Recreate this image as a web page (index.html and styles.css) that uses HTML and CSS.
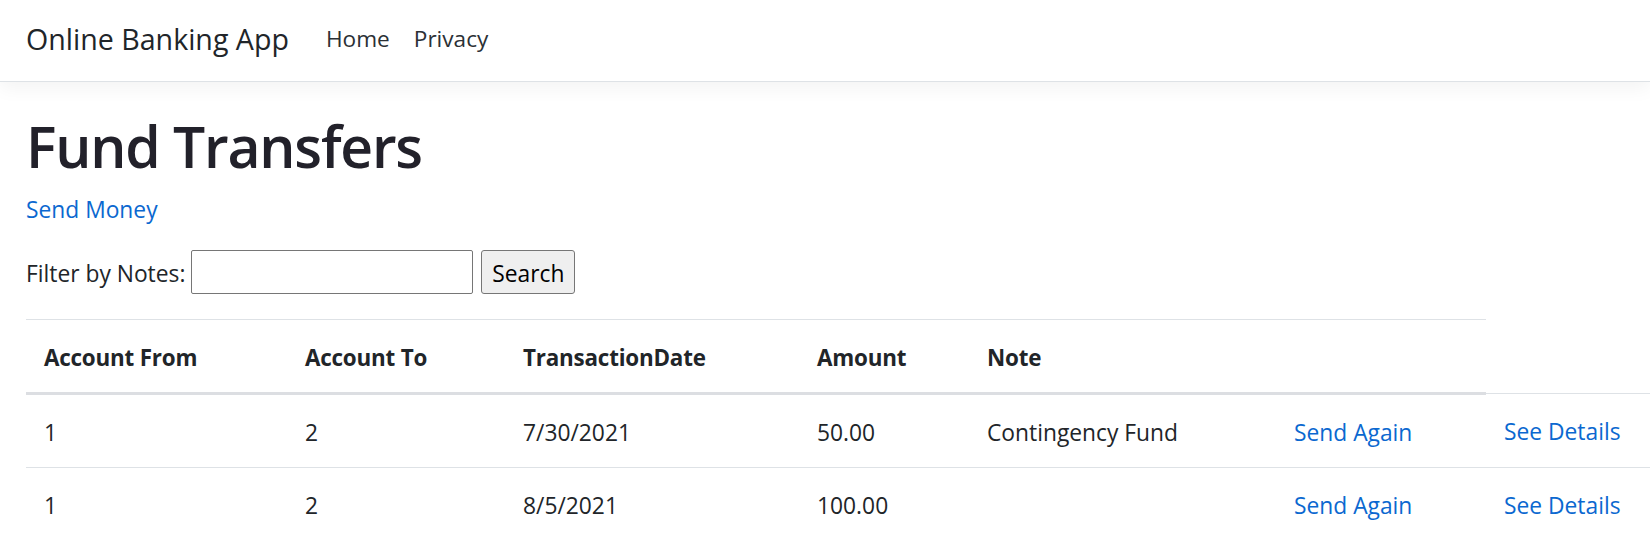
FILE: index.html
```html
<!DOCTYPE html>
<html lang="en">
<head>
<meta charset="utf-8">
<title>Fund Transfers - Online Banking App</title>
<link rel="stylesheet" href="styles.css">
</head>
<body>
<header class="navbar">
  <a class="brand" href="#">Online Banking App</a>
  <nav class="nav">
    <a class="nav-link" href="#">Home</a>
    <a class="nav-link" href="#">Privacy</a>
  </nav>
</header>
<main class="page">
  <h1 class="title">Fund Transfers</h1>
  <p class="action"><a class="link" href="#">Send Money</a></p>
  <form class="filter">
    <label class="filter-label" for="notes">Filter by Notes:</label>
    <input id="notes" type="text" class="filter-input">
    <button type="submit" class="filter-btn">Search</button>
  </form>
  <table class="transfers">
    <colgroup>
      <col class="c-from">
      <col class="c-to">
      <col class="c-date">
      <col class="c-amount">
      <col class="c-note">
      <col class="c-again">
      <col class="c-details">
    </colgroup>
    <thead>
      <tr>
        <th>Account From</th>
        <th>Account To</th>
        <th>TransactionDate</th>
        <th>Amount</th>
        <th>Note</th>
        <th></th>
      </tr>
    </thead>
    <tbody>
      <tr>
        <td>1</td>
        <td>2</td>
        <td>7/30/2021</td>
        <td>50.00</td>
        <td>Contingency Fund</td>
        <td><a class="link" href="#">Send Again</a></td>
        <td><a class="link" href="#">See Details</a></td>
      </tr>
      <tr>
        <td>1</td>
        <td>2</td>
        <td>8/5/2021</td>
        <td>100.00</td>
        <td></td>
        <td><a class="link" href="#">Send Again</a></td>
        <td><a class="link" href="#">See Details</a></td>
      </tr>
    </tbody>
  </table>
</main>
</body>
</html>
```

FILE: styles.css
```css
html, body {
  margin: 0;
  padding: 0;
  overflow: hidden;
}

body {
  font-family: "Open Sans", "Noto Sans", sans-serif;
  font-size: 22.8px;
  line-height: 36px;
  color: #212529;
  background: #ffffff;
}

a {
  text-decoration: none;
}

.navbar {
  box-sizing: border-box;
  height: 82px;
  padding: 16px 26px 0;
  display: flex;
  align-items: flex-start;
  background: #ffffff;
  border-bottom: 1px solid #dee2e6;
  box-shadow: 0 6px 18px rgba(0, 0, 0, 0.05);
}

.brand {
  font-size: 28.6px;
  line-height: 45px;
  color: #212529;
  margin-right: 25px;
}

.nav {
  display: flex;
  padding-top: 5px;
}

.nav-link {
  font-size: 22.6px;
  color: #2b3035;
  padding: 0 12px;
}

.page {
  padding: 28px 0 0 26px;
}

.title {
  margin: 0 0 9px;
  font-size: 57px;
  line-height: 72px;
  letter-spacing: -1.2px;
  font-weight: 600;
  color: #22212a;
}

.action {
  margin: 0;
  padding-top: 1px;
}

.link {
  color: #0b68d0;
}

.filter {
  display: flex;
  align-items: center;
  margin-top: 22px;
  height: 44px;
}

.filter-label {
  margin-right: 6px;
  padding-top: 3px;
}

.filter-input {
  box-sizing: border-box;
  width: 282px;
  height: 44px;
  margin: 0 8px 0 0;
  border: 1px solid #767676;
  border-radius: 2px;
  padding: 2px 3px;
  font: inherit;
  background: #ffffff;
}

.filter-btn {
  box-sizing: border-box;
  width: 94px;
  height: 44px;
  margin: 0;
  padding: 3px 9px 0;
  border: 1px solid #767676;
  border-radius: 3px;
  background: #efefef;
  color: #000000;
  font: inherit;
}

.transfers {
  margin-top: 25px;
  border-collapse: collapse;
  table-layout: fixed;
  width: 1624px;
}

.c-from { width: 261px; }
.c-to { width: 218px; }
.c-date { width: 294px; }
.c-amount { width: 170px; }
.c-note { width: 307px; }
.c-again { width: 210px; }
.c-details { width: 164px; }

.transfers th,
.transfers td {
  padding: 20px 18px 16px;
  text-align: left;
  vertical-align: top;
  white-space: nowrap;
}

.transfers th {
  font-size: 22.4px;
  letter-spacing: -0.2px;
  font-weight: 700;
  border-top: 1px solid #dee2e6;
  border-bottom: 3px solid #dcdee2;
}

.transfers td {
  border-top: 1px solid #dee2e6;
}
```
